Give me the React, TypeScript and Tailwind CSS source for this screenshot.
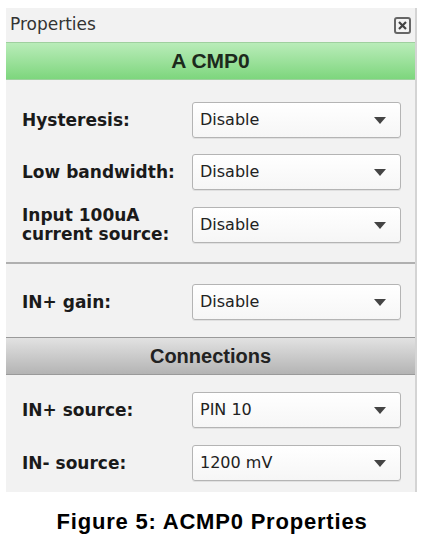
import React from 'react';

type Field = {
  label: string[];
  value: string;
};

const Select = ({ value }: { value: string }) => (
  <div className="flex h-[36px] w-[209px] items-center justify-between rounded-[3px] border border-[#b4b4b4] bg-gradient-to-b from-white to-[#f6f6f6] pl-[7px] pr-[14px] shadow-[0_1px_0_#e0e0e0]">
    <span className="text-[16px] text-[#222]" style={{ fontFamily: 'Tahoma, "DejaVu Sans", sans-serif' }}>
      {value}
    </span>
    <svg width="12" height="7" viewBox="0 0 12 7">
      <path d="M0 0 H12 L6 7 Z" fill="#444" />
    </svg>
  </div>
);

const Row = ({ field }: { field: Field }) => (
  <div className="flex items-center">
    <div
      className="w-[170px] text-[17px] font-bold leading-[19px] text-[#1a1a1a]"
      style={{ fontFamily: 'Tahoma, "DejaVu Sans", sans-serif' }}
    >
      {field.label.map((line) => (
        <div key={line}>{line}</div>
      ))}
    </div>
    <Select value={field.value} />
  </div>
);

const acmpFields: Field[] = [
  { label: ['Hysteresis:'], value: 'Disable' },
  { label: ['Low bandwidth:'], value: 'Disable' },
  { label: ['Input 100uA', 'current source:'], value: 'Disable' },
];

const connectionFields: Field[] = [
  { label: ['IN+ source:'], value: 'PIN 10' },
  { label: ['IN- source:'], value: '1200 mV' },
];

export default function App() {
  return (
    <div className="h-[545px] w-[424px] bg-white pt-[8px]">
      <div className="ml-[6px] w-[411px] border-r-2 border-[#d4d4d4] bg-[#f2f2f2]">
        {/* title bar */}
        <div className="flex h-[34px] items-center justify-between pl-[4px] pr-[4px]">
          <span className="text-[17px] text-[#333]" style={{ fontFamily: 'Tahoma, "DejaVu Sans", sans-serif' }}>
            Properties
          </span>
          <div className="flex h-[17px] w-[17px] items-center justify-center rounded-[3px] border-2 border-[#666] bg-[#f4f4f4]">
            <svg width="9" height="9" viewBox="0 0 9 9">
              <path d="M1 1 L8 8 M8 1 L1 8" stroke="#444" strokeWidth="2.2" />
            </svg>
          </div>
        </div>

        <div className="flex h-[38px] items-center justify-center border-y border-[#9fd09f] bg-gradient-to-b from-[#b9ecb9] to-[#7dd67d]">
          <span className="text-[21px] font-bold text-[#1c2a1c]" style={{ fontFamily: '"Liberation Sans", Arial, sans-serif' }}>
            A CMP0
          </span>
        </div>

        <div className="flex flex-col gap-[16px] pb-[18px] pl-[16px] pt-[22px]">
          {acmpFields.map((f) => (
            <Row key={f.label[0]} field={f} />
          ))}
        </div>

        <div className="h-[2px] bg-[#b0b0b0]" />

        <div className="pb-[17px] pl-[16px] pt-[20px]">
          <Row field={{ label: ['IN+ gain:'], value: 'Disable' }} />
        </div>

        <div className="flex h-[38px] items-center justify-center border-y border-[#9a9a9a] bg-gradient-to-b from-[#e2e2e2] to-[#b4b4b4]">
          <span className="text-[20px] font-bold text-[#222]" style={{ fontFamily: '"Liberation Sans", Arial, sans-serif' }}>
            Connections
          </span>
        </div>

        <div className="flex flex-col gap-[17px] pb-[11px] pl-[16px] pt-[17px]">
          {connectionFields.map((f) => (
            <Row key={f.label[0]} field={f} />
          ))}
        </div>
      </div>

      <div
        className="mt-[13px] text-center text-[22px] font-bold tracking-[0.8px] text-black"
        style={{ fontFamily: '"Liberation Sans", Arial, sans-serif' }}
      >
        Figure 5: ACMP0 Properties
      </div>
    </div>
  );
}
